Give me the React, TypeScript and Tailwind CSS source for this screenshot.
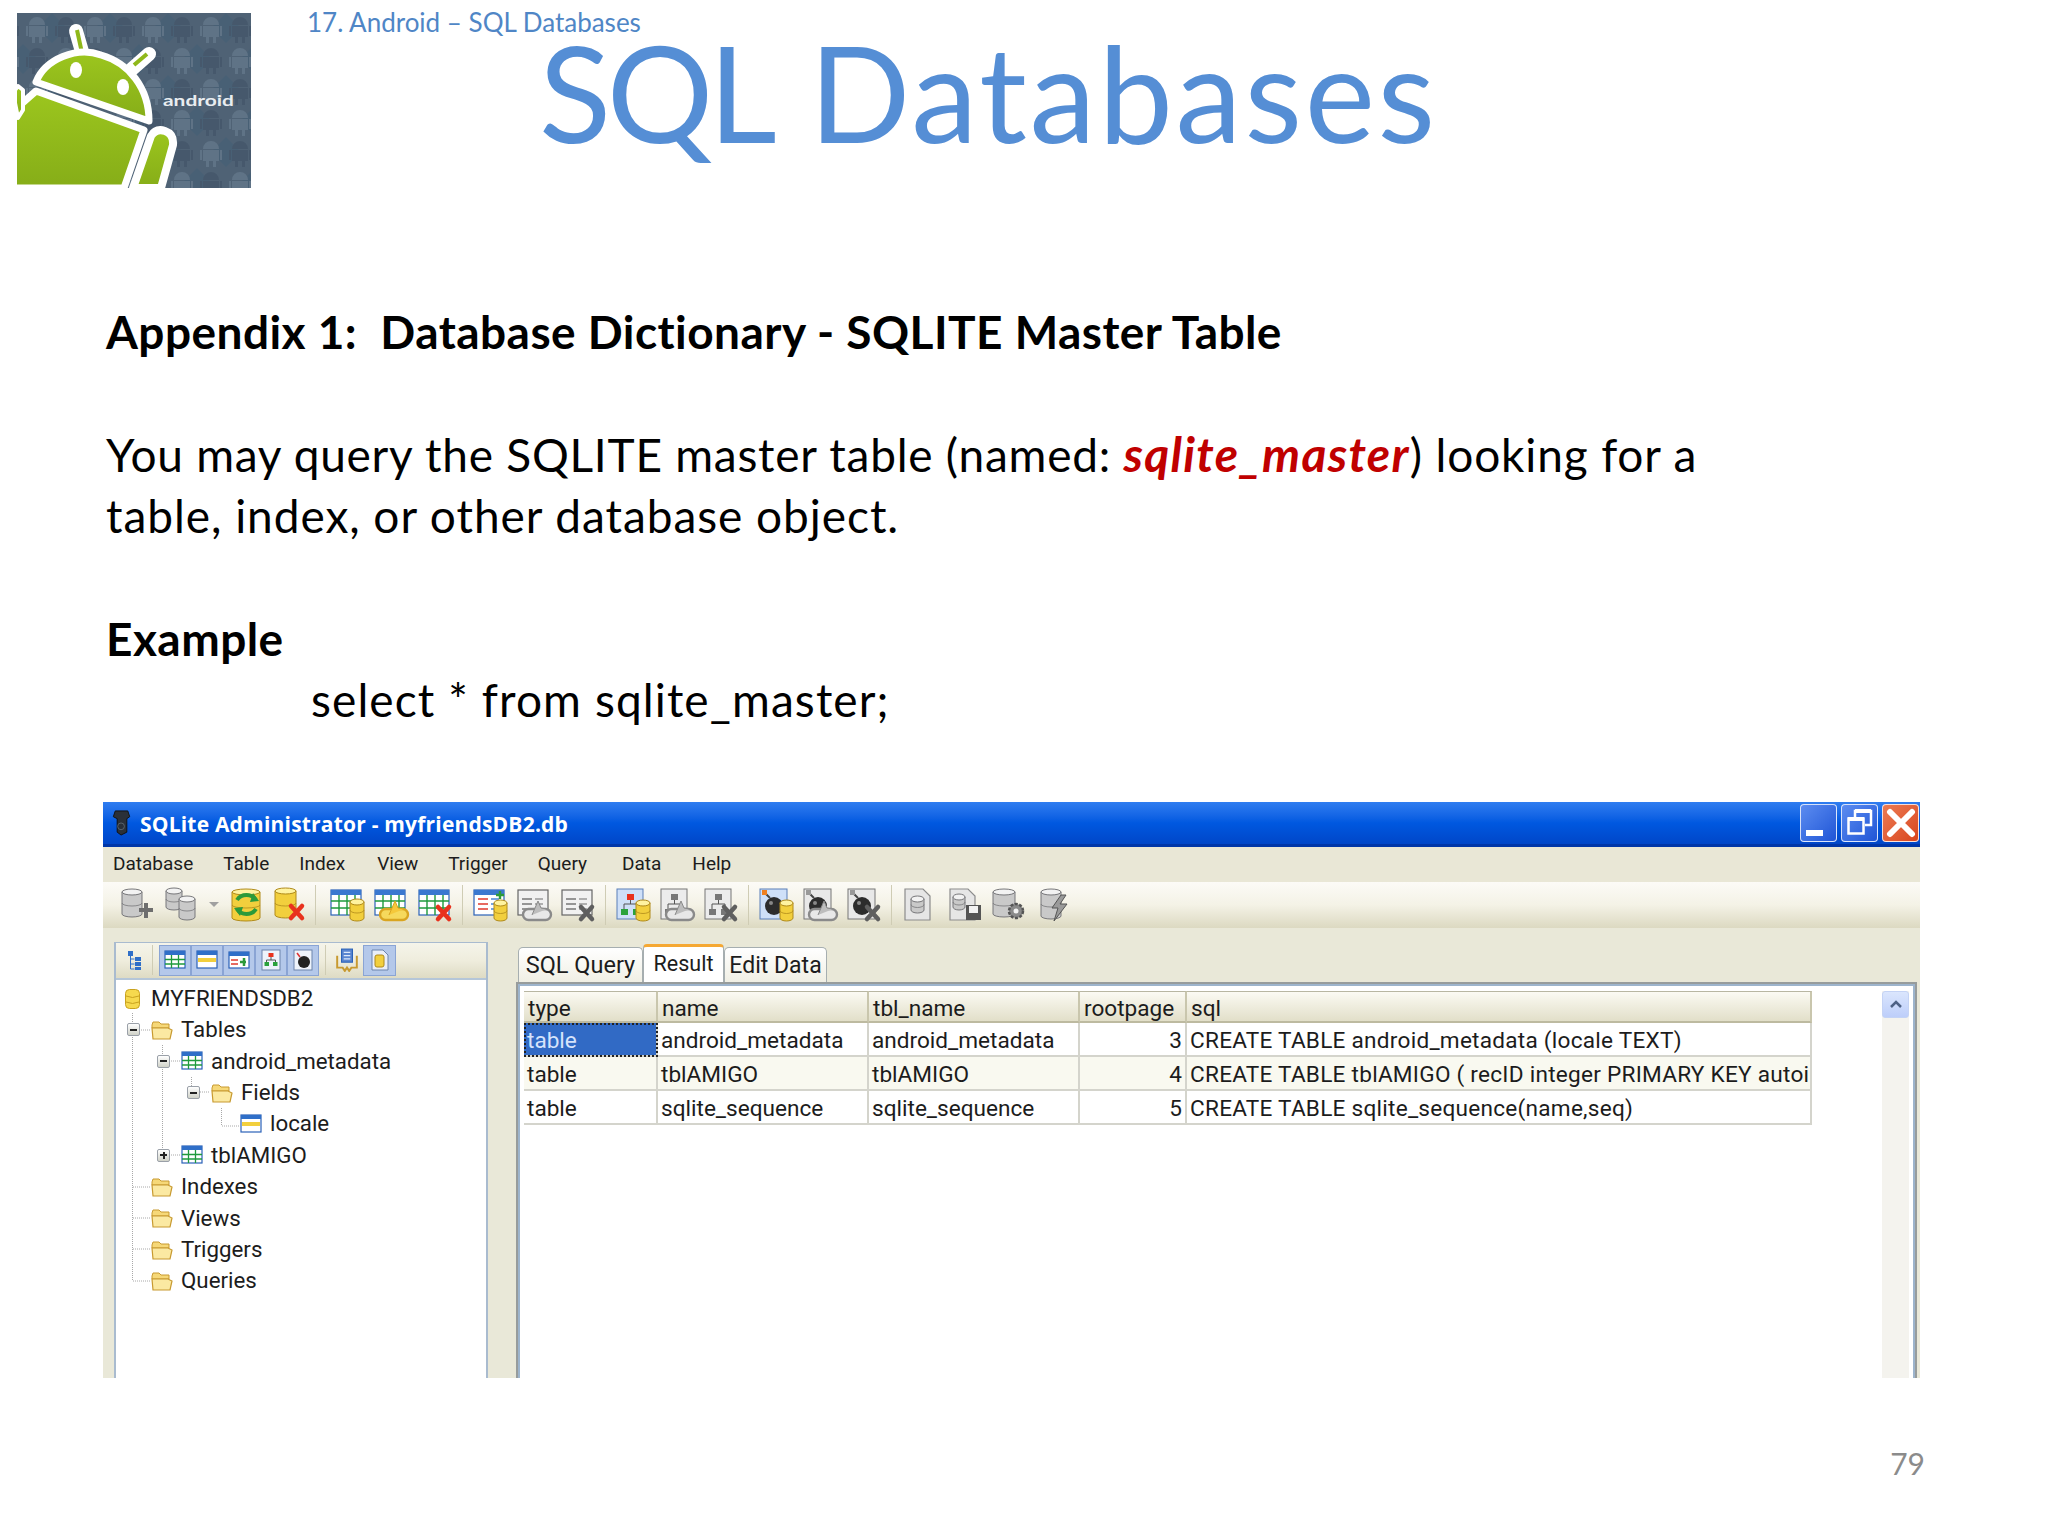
import type { ReactNode } from "react";

// --- toolbar icon parts, all drawn in a 34x34 box ---
const grayDb = { top: "#f2f2f2", side: "#c9c9c9", line: "#77777a" };
const yellowDb = { top: "#fff3a0", side: "#f2cf3d", line: "#b08a1a" };

function Db({ x, y, w = 16, h = 22, gray = false }: { x: number; y: number; w?: number; h?: number; gray?: boolean }) {
    const c = gray ? grayDb : yellowDb;
    const ry = 3;
    return (
        <g>
            <path d={`M${x} ${y + ry}v${h - 2 * ry}a${w / 2} ${ry} 0 0 0 ${w} 0v${-(h - 2 * ry)}z`} fill={c.side} stroke={c.line} strokeWidth="1" />
            <path d={`M${x} ${y + h / 2}a${w / 2} ${ry} 0 0 0 ${w} 0`} fill="none" stroke={c.line} strokeWidth=".8" />
            <ellipse cx={x + w / 2} cy={y + ry} rx={w / 2} ry={ry} fill={c.top} stroke={c.line} strokeWidth="1" />
        </g>
    );
}

function RedX({ x = 18, y = 18, gray = false }: { x?: number; y?: number; gray?: boolean }) {
    return (
        <g stroke={gray ? "#5f5f5f" : "#e8321e"} strokeWidth="4.5" strokeLinecap="round">
            <path d={`M${x} ${y}l11 12M${x + 11} ${y}l-11 12`} />
        </g>
    );
}

function Ring({ gray = false }: { gray?: boolean }) {
    const c = gray ? "#8a8a8a" : "#d9a520";
    return (
        <g>
            <rect x="6" y="21" width="28" height="11" rx="5.5" fill={gray ? "#e8e8e8" : "#f6d95c"} stroke={c} strokeWidth="2.4" />
            <path d="M15 27l6-14 3 7 6 1" fill={gray ? "#bdbdbd" : "#f5c83a"} stroke={c} strokeWidth="1" />
        </g>
    );
}

function Grid() {
    return (
        <g>
            <rect x="1" y="2" width="30" height="25" fill="#fff" stroke="#2b62b8" strokeWidth="1.2" />
            <rect x="1" y="2" width="30" height="5" fill="#3a78d0" />
            <path d="M1 13h30M1 20h30M9 7v20M17 7v20M25 7v20" stroke="#1f9a3c" strokeWidth="1.4" />
        </g>
    );
}

function Form({ gray = false }: { gray?: boolean }) {
    const edge = gray ? "#666" : "#2b62b8";
    return (
        <g>
            <rect x="1" y="2" width="30" height="25" fill={gray ? "#f1f1f1" : "#fff"} stroke={edge} strokeWidth="1.2" />
            {!gray && <rect x="1" y="2" width="30" height="5" fill="#3a78d0" />}
            <path d="M5 11h10M5 16h10M5 21h10" stroke={gray ? "#777" : "#e03a2e"} strokeWidth="1.6" />
            <path d="M18 11h8M18 16h8M18 21h8" stroke={gray ? "#999" : "#4a86d8"} strokeWidth="1.6" />
        </g>
    );
}

function Hierarchy({ gray = false }: { gray?: boolean }) {
    return (
        <g>
            <rect x="1" y="1" width="26" height="30" fill={gray ? "#ececec" : "#cfe0f8"} stroke={gray ? "#777" : "#5a7fb8"} strokeWidth="1" />
            <rect x="11" y="6" width="7" height="6" fill={gray ? "#777" : "#e8321e"} />
            <path d="M14.500 12v4M8 21v-5h13v5" fill="none" stroke="#555" strokeWidth="1" />
            <rect x="5" y="21" width="7" height="6" fill={gray ? "#777" : "#2aa23c"} />
            <rect x="17" y="21" width="7" height="6" fill={gray ? "#777" : "#2aa23c"} />
        </g>
    );
}

function Bomb({ color = false }: { color?: boolean }) {
    return (
        <g>
            <rect x="1" y="1" width="27" height="30" fill={color ? "#cfe0f8" : "#e8e8e8"} stroke={color ? "#5a7fb8" : "#777"} strokeWidth="1" />
            <circle cx="15" cy="18" r="9" fill="#2c2c2c" />
            <path d="M11 10L6 5" stroke="#444" strokeWidth="2" />
            <rect x="3" y="2" width="5" height="5" fill={color ? "#f08020" : "#999"} />
            <circle cx="12" cy="15" r="2" fill="#888" />
        </g>
    );
}

function Doc() {
    return <path d="M3 1h18l7 7v24H3z" fill="#e6e6e6" stroke="#8c8c8c" strokeWidth="1.2" />;
}

function Tool({ children, box = 34 }: { children: ReactNode; box?: number }) {
    return (
        <svg viewBox={`0 0 ${box} ${box}`} className="w-[34px] h-[34px] shrink-0 overflow-visible">
            {children}
        </svg>
    );
}

function Sep() {
    return <div className="w-px h-[40px] mx-[10px] bg-[#cfccb4] shrink-0" />;
}

function Toolbar() {
    return (
        <div className="h-[46px] pl-[17px] flex items-center bg-gradient-to-b from-[#fcfbf7] via-[#f4f2e6] to-[#dcd9c1]">
            <div className="flex items-center gap-[11px]">
                <Tool>
                    <Db x={2} y={1} w={20} h={28} gray />
                    <path d="M19 22h14M26 15v15" stroke="#6e6e6e" strokeWidth="4" />
                </Tool>
                <Tool>
                    <Db x={1} y={0} w={16} h={22} gray />
                    <Db x={14} y={8} w={16} h={24} gray />
                </Tool>
                <div className="w-[10px] flex justify-center mx-[-1px]">
                    <div className="w-0 h-0 border-x-[5px] border-x-transparent border-t-[5px] border-t-[#a0a0a0]" />
                </div>
                <Tool>
                    <Db x={3} y={1} w={28} h={32} />
                    <path d="M8 12a11 10 0 0 1 19 0M27 21a11 10 0 0 1-19 0" fill="none" stroke="#2c9a3a" strokeWidth="4" />
                    <path d="M24 5l6 8-9 1zM11 28l-6-8 9-1z" fill="#2c9a3a" />
                </Tool>
                <Tool>
                    <Db x={1} y={0} w={21} h={30} />
                    <RedX x={17} y={18} />
                </Tool>
            </div>
            <div className="w-px h-[40px] ml-[7px] mr-[14px] bg-[#cfccb4] shrink-0" />
            <div className="flex items-center gap-[10px]">
                <Tool>
                    <Grid />
                    <Db x={20} y={11} w={14} h={22} />
                </Tool>
                <Tool>
                    <Grid />
                    <Ring />
                </Tool>
                <Tool>
                    <Grid />
                    <RedX x={20} y={19} />
                </Tool>
            </div>
            <Sep />
            <div className="flex items-center gap-[10px]">
                <Tool>
                    <Form />
                    <Db x={21} y={12} w={13} h={21} />
                    <path d="M27 3v8M23 7h8" stroke="#2c9a3a" strokeWidth="2.4" />
                </Tool>
                <Tool>
                    <Form gray />
                    <Ring gray />
                </Tool>
                <Tool>
                    <Form gray />
                    <RedX x={20} y={19} gray />
                </Tool>
            </div>
            <Sep />
            <div className="flex items-center gap-[10px]">
                <Tool>
                    <Hierarchy />
                    <Db x={20} y={12} w={14} h={21} />
                </Tool>
                <Tool>
                    <Hierarchy gray />
                    <Ring gray />
                </Tool>
                <Tool>
                    <Hierarchy gray />
                    <RedX x={20} y={19} gray />
                </Tool>
            </div>
            <Sep />
            <div className="flex items-center gap-[10px]">
                <Tool>
                    <Bomb color />
                    <Db x={21} y={12} w={13} h={21} />
                </Tool>
                <Tool>
                    <Bomb />
                    <Ring gray />
                </Tool>
                <Tool>
                    <Bomb />
                    <RedX x={20} y={19} gray />
                </Tool>
            </div>
            <Sep />
            <div className="flex items-center gap-[11px]">
                <Tool>
                    <Doc />
                    <Db x={9} y={8} w={13} h={17} gray />
                </Tool>
                <Tool>
                    <Doc />
                    <Db x={6} y={6} w={12} h={16} gray />
                    <rect x="19" y="17" width="15" height="15" fill="#555" />
                    <rect x="22" y="18" width="9" height="7" fill="#f2f2f2" />
                </Tool>
                <Tool>
                    <Db x={1} y={1} w={22} h={28} gray />
                    <circle cx="24" cy="23" r="7" fill="#8a8a8a" stroke="#555" strokeWidth="2.500" strokeDasharray="3 1.500" />
                    <circle cx="24" cy="23" r="2.500" fill="#f2f2f2" />
                </Tool>
                <Tool>
                    <Db x={4} y={1} w={20} h={30} gray />
                    <path d="M24 7l-9 13h6l-4 13 13-17h-7l6-9z" fill="#9a9a9a" stroke="#555" strokeWidth="1" />
                </Tool>
            </div>
        </div>
    );
}

// --- tree panel ---
function Small({ children, className = "w-[22px] h-[22px]" }: { children: ReactNode; className?: string }) {
    return (
        <svg viewBox="0 0 22 22" className={`${className} shrink-0`}>
            {children}
        </svg>
    );
}

function Folder() {
    return (
        <Small>
            <path d="M1 6l1-3h6l2 2h8v4H1z" fill="#f6d878" stroke="#c89a30" strokeWidth="1" />
            <path d="M1 9h16l4 2-2 9H2z" fill="#fbe9a2" stroke="#c89a30" strokeWidth="1.200" />
        </Small>
    );
}

function TableIcon() {
    return (
        <Small>
            <rect x="1" y="2" width="20" height="17" fill="#fff" stroke="#2b62b8" strokeWidth="1.200" />
            <rect x="1" y="2" width="20" height="4" fill="#2f6fc8" />
            <path d="M1 10.500h20M1 15h20M7.500 6v13M14.500 6v13" stroke="#1f9a3c" strokeWidth="1.300" />
        </Small>
    );
}

function FieldIcon() {
    return (
        <Small>
            <rect x="1" y="2" width="20" height="17" fill="#fff" stroke="#2b62b8" strokeWidth="1.200" />
            <rect x="1" y="2" width="20" height="4" fill="#2f6fc8" />
            <rect x="2" y="9" width="18" height="4" fill="#f2cf3d" />
        </Small>
    );
}

function Expander({ open }: { open: boolean }) {
    return (
        <div className="relative w-[13px] h-[13px] rounded-[2px] border border-[#9aa0a8] bg-gradient-to-b from-white to-[#d0d2c8] flex items-center justify-center">
            <div className="w-[7px] h-[2px] bg-[#222]" />
            {!open && <div className="absolute w-[2px] h-[7px] bg-[#222]" />}
        </div>
    );
}

type TreeNode = { label: string; indent: string; icon: ReactNode; expander?: "open" | "closed" };

const treeNodes: TreeNode[] = [
    { label: "Tables", indent: "pl-[13px]", icon: <Folder />, expander: "open" },
    { label: "android_metadata", indent: "pl-[43px]", icon: <TableIcon />, expander: "open" },
    { label: "Fields", indent: "pl-[73px]", icon: <Folder />, expander: "open" },
    { label: "locale", indent: "pl-[102px]", icon: <FieldIcon /> },
    { label: "tblAMIGO", indent: "pl-[43px]", icon: <TableIcon />, expander: "closed" },
    { label: "Indexes", indent: "pl-[13px]", icon: <Folder /> },
    { label: "Views", indent: "pl-[13px]", icon: <Folder /> },
    { label: "Triggers", indent: "pl-[13px]", icon: <Folder /> },
    { label: "Queries", indent: "pl-[13px]", icon: <Folder /> },
];

function PanelButton({ children, wide = false }: { children: ReactNode; wide?: boolean }) {
    return (
        <div className={`${wide ? "w-[33px]" : "w-[32px]"} h-[31px] bg-[#b4c8ea] border border-[#8aa4d4] flex items-center justify-center`}>
            {children}
        </div>
    );
}

function TreePanel() {
    return (
        <div className="w-[374px] shrink-0 flex flex-col h-full border-x-2 border-[#a9bbcf] bg-white">
            <div className="h-[38px] shrink-0 flex items-center pl-[8px] bg-gradient-to-b from-[#f5f4ea] via-[#efeddd] to-[#dedbc4] border-t border-t-[#a9bbcf] border-b-2 border-b-[#b5c6d8]">
                <Small>
                    <path d="M4 2h5v5H4zM11 8h6v4h-6zM11 13h6v4h-6zM11 18h6v3h-6z" fill="#2f6fc8" />
                    <path d="M6.500 7v13h4M6.500 10h4M6.500 15h4" fill="none" stroke="#2f6fc8" strokeWidth="1" />
                </Small>
                <div className="w-px h-[30px] mx-[6px] bg-[#cfccb4]" />
                <div className="flex">
                    <PanelButton>
                        <TableIcon />
                    </PanelButton>
                    <PanelButton>
                        <FieldIcon />
                    </PanelButton>
                    <PanelButton>
                        <Small>
                            <rect x="1" y="3" width="20" height="16" fill="#fff" stroke="#2b62b8" strokeWidth="1.200" />
                            <rect x="1" y="3" width="20" height="4" fill="#2f6fc8" />
                            <path d="M3 11h7M3 15h7" stroke="#e03a2e" strokeWidth="1.500" />
                            <path d="M12 13h6M16 9v8" stroke="#2c9a3a" strokeWidth="2.500" />
                        </Small>
                    </PanelButton>
                    <PanelButton>
                        <Small>
                            <rect x="2" y="1" width="18" height="20" fill="#eef3fb" stroke="#6c84ab" strokeWidth="1" />
                            <rect x="8.500" y="4" width="5" height="4" fill="#e8321e" />
                            <path d="M11 8v3M6.500 13v-2h9v2" fill="none" stroke="#555" strokeWidth="1" />
                            <rect x="4.500" y="13" width="4.500" height="4" fill="#2aa23c" />
                            <rect x="13" y="13" width="4.500" height="4" fill="#2aa23c" />
                        </Small>
                    </PanelButton>
                    <PanelButton>
                        <Small>
                            <rect x="2" y="1" width="18" height="20" fill="#eef3fb" stroke="#6c84ab" strokeWidth="1" />
                            <circle cx="12" cy="13" r="6" fill="#222" />
                            <path d="M8 8L5 4" stroke="#d33" strokeWidth="1.500" />
                        </Small>
                    </PanelButton>
                </div>
                <div className="w-px h-[30px] ml-[6px] mr-[9px] bg-[#cfccb4]" />
                <Small className="w-[24px] h-[24px]">
                    <rect x="6" y="1" width="10" height="12" fill="#5a86d0" stroke="#2b62b8" strokeWidth="1" />
                    <path d="M8 4h6M8 7h6M8 10h6" stroke="#dce8fa" strokeWidth="1" />
                    <path d="M2 7v11h5l2 3 2-3 2 3 2-3h5V7" fill="none" stroke="#c89a30" strokeWidth="1.800" />
                </Small>
                <div className="ml-[4px]">
                    <PanelButton wide>
                        <Small>
                            <path d="M3 1h11l5 5v15H3z" fill="#e9eef8" stroke="#6c84ab" strokeWidth="1" />
                            <rect x="6" y="6" width="9" height="12" rx="2" fill="#f2cf3d" stroke="#b08a1a" strokeWidth="1" />
                        </Small>
                    </PanelButton>
                </div>
            </div>
            <div className="relative flex-1 ml-[-2px] pt-[3px] font-[Roboto,sans-serif] text-[22.3px] text-[#1c1c1c]">
                <svg className="absolute inset-0 w-full h-full pointer-events-none">
                    <path
                        d="M18.500 33V301M19 50h18M19 207h18M19 238h18M19 269h18M19 301h18M48.500 65V175M49 81h18M49 175h18M77.500 97V112M78 112h18M107.500 128V146M108 146h18"
                        fill="none"
                        stroke="#a8a8a8"
                        strokeDasharray="1 1"
                    />
                </svg>
                <div className="relative h-[31.4px] pl-[11px] flex items-center">
                    <svg viewBox="0 0 15 20" className="w-[15px] h-[20px] mr-[11px] shrink-0">
                        <rect x=".5" y=".5" width="14" height="19" rx="4" fill="#f6d94e" stroke="#c9a21f" />
                        <path d="M1 7q6.500 3 13 0M1 13q6.500 3 13 0" fill="none" stroke="#c9a21f" />
                    </svg>
                    MYFRIENDSDB2
                </div>
                {treeNodes.map((n) => (
                    <div key={n.label} className={`relative h-[31.4px] ${n.indent} flex items-center`}>
                        <div className="w-[13px] mr-[11px] shrink-0">{n.expander && <Expander open={n.expander === "open"} />}</div>
                        <div className="mr-[8px]">{n.icon}</div>
                        {n.label}
                    </div>
                ))}
            </div>
        </div>
    );
}

// --- result grid ---
const columns = ["type", "name", "tbl_name", "rootpage", "sql"];
const rows = [
    ["table", "android_metadata", "android_metadata", "3", "CREATE TABLE android_metadata (locale TEXT)"],
    ["table", "tblAMIGO", "tblAMIGO", "4", "CREATE TABLE tblAMIGO ( recID integer PRIMARY KEY autoincrement, name TEXT, phone TEXT)"],
    ["table", "sqlite_sequence", "sqlite_sequence", "5", "CREATE TABLE sqlite_sequence(name,seq)"],
];
const gridCols = "grid grid-cols-[134px_211px_211px_107px_625px]";

function ResultGrid() {
    return (
        <div className="w-[1288px] text-[22.6px] font-[Roboto,sans-serif] text-[#1c1c1c] leading-none">
            <div className={`${gridCols} h-[32px]`}>
                {columns.map((c) => (
                    <div key={c} className="pl-[4px] pt-[6px] flex items-center bg-gradient-to-b from-[#fbfaf3] to-[#e2dfc9] border-t border-t-[#b8b6a2] border-r-2 border-r-[#c9c6ad] border-b-2 border-b-[#bdbaa0]">
                        {c}
                    </div>
                ))}
            </div>
            {rows.map((row, i) => (
                <div key={i} className={`${gridCols} h-[34px] ${i === 1 ? "bg-[#f9f9f0]" : "bg-white"}`}>
                    {row.map((cell, j) => (
                        <div
                            key={j}
                            className={`px-[3px] pt-[5px] flex items-center whitespace-nowrap overflow-hidden border-b-2 border-b-[#d4d4cc] border-r-2 border-r-[#d4d4cc] ${j === 3 ? "justify-end" : ""} ${j === 4 ? "tracking-[0.25px]" : ""} ${
                                i === 0 && j === 0 ? "bg-[#316ac5] text-[#d5e3fb] outline-2 outline-dotted outline-[#222] -outline-offset-2" : ""
                            }`}
                        >
                            {cell}
                        </div>
                    ))}
                </div>
            ))}
        </div>
    );
}

function WindowButton({ children, red = false }: { children: ReactNode; red?: boolean }) {
    return (
        <div className={`w-[37px] h-[38px] rounded-[4px] border border-white/80 flex items-center justify-center ${red ? "bg-gradient-to-br from-[#ec7a52] to-[#d8451c]" : "bg-gradient-to-br from-[#5c8cf0] to-[#1f54d6]"}`}>
            {children}
        </div>
    );
}

function SqliteWindow() {
    return (
        <div className="ml-[103px] mt-[71px] w-[1817px] h-[576px] overflow-hidden flex flex-col bg-[#e9e8d8]">
            <div className="h-[45px] shrink-0 relative flex items-center bg-gradient-to-b from-[#2f7df0] via-[#0058e0] to-[#0046c8] border-b-[3px] border-b-[#0036a8]">
                <svg viewBox="0 0 20 28" className="w-[20px] h-[27px] ml-[9px] mr-[8px] shrink-0">
                    <path d="M3 2h13l2 6-3 2v14l-6 3-4-3V10L1 8z" fill="#2a3038" stroke="#111" />
                    <circle cx="9" cy="18" r="3.500" fill="none" stroke="#5a646c" />
                </svg>
                <span className="pt-[3px] font-['Open_Sans',sans-serif] font-bold text-[21px] text-white tracking-[0.2px]">SQLite Administrator - myfriendsDB2.db</span>
                <div className="ml-auto mr-[1px] flex gap-[4px]">
                    <WindowButton>
                        <div className="w-[17px] h-[6px] bg-white mt-[20px] mr-[8px]" />
                    </WindowButton>
                    <WindowButton>
                        <svg viewBox="0 0 28 28" className="w-[28px] h-[28px]">
                            <path d="M9 8V2h16v14h-6" fill="none" stroke="#fff" strokeWidth="2.500" />
                            <path d="M9 2h16" stroke="#fff" strokeWidth="4" />
                            <rect x="2.500" y="9.500" width="15" height="15" fill="none" stroke="#fff" strokeWidth="2.500" />
                            <path d="M2 10h16" stroke="#fff" strokeWidth="4" />
                        </svg>
                    </WindowButton>
                    <WindowButton red>
                        <svg viewBox="0 0 30 30" className="w-[30px] h-[30px]">
                            <path d="M4 4l22 22M26 4L4 26" stroke="#fff" strokeWidth="6" strokeLinecap="round" />
                        </svg>
                    </WindowButton>
                </div>
            </div>
            <div className="h-[35px] shrink-0 flex items-center pl-[10px] gap-[30px] bg-[#e9e7d6] font-[Roboto,sans-serif] text-[19px] text-[#1c1c1c]">
                <span>Database</span>
                <span>Table</span>
                <span>Index</span>
                <span className="ml-[2px]">View</span>
                <span>Trigger</span>
                <span className="mr-[5px]">Query</span>
                <span>Data</span>
                <span className="ml-[1px]">Help</span>
            </div>
            <Toolbar />
            <div className="flex-1 min-h-0 flex pt-[14px] pl-[11px] gap-[28px]">
                <TreePanel />
                <div className="w-[1401px] flex flex-col">
                    <div className="h-[40px] shrink-0 pl-[2px] flex items-end font-[Roboto,sans-serif] text-[#1c1c1c]">
                        <div className="w-[125px] h-[35px] pt-[2px] flex items-center justify-center text-[23.500px] rounded-t-[5px] border border-b-0 border-[#a6aeb0] bg-gradient-to-b from-white to-[#f0efe4]">SQL Query</div>
                        <div className="w-[81px] h-[38px] flex items-start pt-[1px] justify-center text-[21.500px] rounded-t-[4px] bg-white border-x border-[#a6aeb0] border-t-[3px] border-t-[#f5a833]">Result</div>
                        <div className="w-[103px] h-[35px] pt-[2px] flex items-center justify-center text-[23px] rounded-t-[5px] border border-b-0 border-[#a6aeb0] bg-gradient-to-b from-white to-[#f0efe4]">Edit Data</div>
                    </div>
                    <div className="flex-1 flex bg-white border-t-2 border-t-[#979c9c] border-x-2 border-x-[#979c9c]">
                        <div className="flex-1 flex border-t-2 border-t-[#9db4cc] border-x-2 border-x-[#9db4cc] pt-[5px] pl-[4px]">
                            <ResultGrid />
                            <div className="ml-[70px] w-[27px] h-full flex flex-col bg-[#f4f3ee]">
                                <div className="h-[27px] rounded-[3px] bg-gradient-to-b from-[#dbe6fd] to-[#bdcefa] border border-[#c4d3f5] flex items-center justify-center">
                                    <svg viewBox="0 0 14 9" className="w-[14px] h-[9px]">
                                        <path d="M2 7l5-5 5 5" fill="none" stroke="#4d6185" strokeWidth="2.500" />
                                    </svg>
                                </div>
                            </div>
                        </div>
                    </div>
                </div>
            </div>
        </div>
    );
}

function Droid({ x, y, fill }: { x: number; y: number; fill: string }) {
    return <path transform={`translate(${x} ${y})`} d="M3 9a8 8 0 0 1 16 0zM3 10h16v11h-3v6h-3v-6h-4v6H6v-6H3zM0 10h2v10H0zM20 10h2v10h-2z" fill={fill} />;
}

function AndroidLogo() {
    return (
        <svg viewBox="0 0 234 175" className="w-[234px] h-[175px] shrink-0">
            <defs>
                <pattern id="droids" width="58" height="62" patternUnits="userSpaceOnUse" x="6" y="0">
                    <rect width="58" height="62" fill="#4f6275" />
                    <path d="M29 0l15 15-15 15-15-15zM0 31l15 15-15 15zM58 31L43 46l15 15z" fill="#486075" />
                    <Droid x={3} y={3} fill="#5f7386" />
                    <Droid x={32} y={34} fill="#5f7386" />
                    <Droid x={32} y={3} fill="#46586c" />
                    <Droid x={3} y={34} fill="#46586c" />
                </pattern>
                <linearGradient id="green" x1="0" y1="0" x2="0" y2="1">
                    <stop offset="0" stopColor="#9cc61e" />
                    <stop offset="1" stopColor="#86ad18" />
                </linearGradient>
            </defs>
            <rect width="234" height="175" fill="url(#droids)" />
            <g stroke="#fff" strokeLinejoin="round">
                <path d="M66 42L59 18M115 56l17-15" strokeWidth="14" strokeLinecap="round" />
                <path d="M65 40L60 17M117 52l13-11" strokeWidth="4" stroke="#8fb81a" />
                <path d="M19 69C28 46 60 33 84 42C112 50 132 75 132 108z" fill="url(#green)" strokeWidth="7" />
                <path d="M-6 175V100L19 78L127 117L107 175z" fill="url(#green)" strokeWidth="7" />
                <path d="M116 175l18-52q5-8 14-5q9 3 8 14l-12 43z" fill="url(#green)" strokeWidth="8" />
                <path d="M-4 80l5-7 5 4v20l-5 8z" fill="url(#green)" strokeWidth="4" />
            </g>
            <ellipse cx="59" cy="57" rx="6" ry="8" fill="#fff" />
            <ellipse cx="106" cy="74" rx="6" ry="8" fill="#fff" />
            <text x="146" y="93" textLength="71" lengthAdjust="spacingAndGlyphs" fontFamily="Lato, sans-serif" fontWeight="700" fontSize="15" fill="#e9edf0">
                android
            </text>
        </svg>
    );
}

export default function App() {
    return (
        <div className="relative w-[2048px] h-[1536px] bg-white overflow-hidden font-[Lato,sans-serif] text-black">
            <header className="flex pt-[13px] pl-[17px] h-[301px]">
                <AndroidLogo />
                <div className="pl-[56px] flex flex-col">
                    <p className="text-[26px] leading-[18px] text-[#4f86c6]">17. Android – SQL Databases</p>
                    <h1 className="pl-[232px] mt-[6px] text-[133px] tracking-[2.7px] leading-[110px] text-[#558ed5] whitespace-nowrap">
                        <span className="tracking-[-4.5px]">SQL</span> Databases
                    </h1>
                </div>
            </header>
            <main className="pl-[106px] text-[46px] leading-[61.4px] tracking-[1.1px]">
                <p className="font-bold tracking-[0.45px]">Appendix 1:&nbsp; Database Dictionary - SQLITE Master Table</p>
                <p>&nbsp;</p>
                <p className="w-[1700px] tracking-[0.95px]">
                    <span className="tracking-[0.75px]">You may query the SQLITE master table (named: </span>
                    <strong className="italic text-[48px] leading-[40px] tracking-[1.3px] text-[#c00000]">sqlite_master</strong>
                    <span className="tracking-[0.85px]">) looking for a</span>
                    <br />
                    table, index, or other database object.
                </p>
                <p>&nbsp;</p>
                <p className="font-bold tracking-[0.45px]">Example</p>
                <p className="pl-[205px]">select * from sqlite_master;</p>
            </main>
            <SqliteWindow />
            <div className="pr-[123px] mt-[70px] text-right text-[30px] leading-none text-[#8b8b8b]">79</div>
        </div>
    );
}
